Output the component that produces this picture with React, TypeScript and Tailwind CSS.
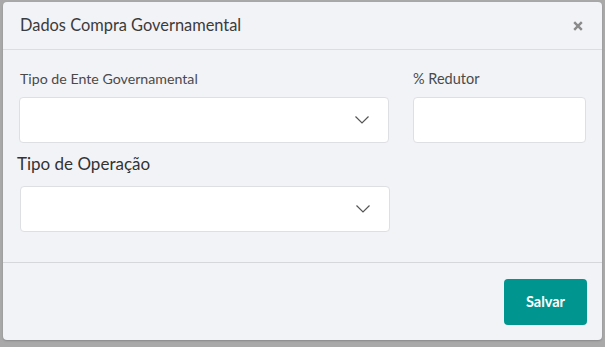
import React from "react";

function Chevron() {
  return (
    <svg width="16" height="10" viewBox="0 0 16 10" fill="none">
      <path d="M1.5 1.5 L8 8 L14.5 1.5" stroke="#555" strokeWidth="1.2" />
    </svg>
  );
}

export default function App() {
  const font = { fontFamily: "Lato, 'Noto Sans', sans-serif" };
  return (
    <div className="w-[605px] h-[347px] bg-[#a9a9a9] pt-[2px] pl-[3px] overflow-hidden" style={font}>
      <div className="w-[599px] h-[338px] bg-[#f2f3f7] rounded-[4px] flex flex-col shadow-[0_1px_2px_rgba(0,0,0,0.2)]">
        <div className="h-[48px] border-b border-[#dcdde1] flex items-center justify-between pl-[17px] pr-[19px] shrink-0">
          <span className="text-[16.4px] text-[#3b3b3b]">Dados Compra Governamental</span>
          <svg width="10" height="10" viewBox="0 0 10 10">
            <path d="M1.2 1.2 L8.8 8.8 M8.8 1.2 L1.2 8.8" stroke="#8a8a8a" strokeWidth="2.4" />
          </svg>
        </div>
        <div className="flex-1 pl-[16px] pr-[15px] pt-[21px] border-b border-[#d6d7db]">
          <div className="flex gap-[24px]">
            <div className="w-[370px] flex flex-col">
              <label className="text-[14.2px] text-[#4a4a4a] h-[16px] leading-[16px] pl-[1px]">Tipo de Ente Governamental</label>
              <div className="mt-[10px] h-[46px] bg-white border border-[#dedfe3] rounded-[4px] flex items-center justify-end pr-[18px]">
                <Chevron />
              </div>
            </div>
            <div className="w-[173px] flex flex-col">
              <label className="text-[14.5px] text-[#4a4a4a] h-[16px] leading-[16px]">% Redutor</label>
              <div className="mt-[10px] h-[46px] bg-white border border-[#dedfe3] rounded-[4px]" />
            </div>
          </div>
          <div className="w-[370px] ml-[1px] flex flex-col mt-[11px]">
            <label className="text-[17px] text-[#333] h-[20px] leading-[20px] -ml-[3px]">Tipo de Operação</label>
            <div className="mt-[12px] h-[46px] bg-white border border-[#dedfe3] rounded-[4px] flex items-center justify-end pr-[18px]">
              <Chevron />
            </div>
          </div>
        </div>
        <div className="h-[77px] shrink-0 flex items-start justify-end pr-[15px] pt-[16px]">
          <button className="w-[83px] h-[46px] bg-[#00968f] rounded-[4px] text-white font-bold text-[14.5px]">Salvar</button>
        </div>
      </div>
    </div>
  );
}
